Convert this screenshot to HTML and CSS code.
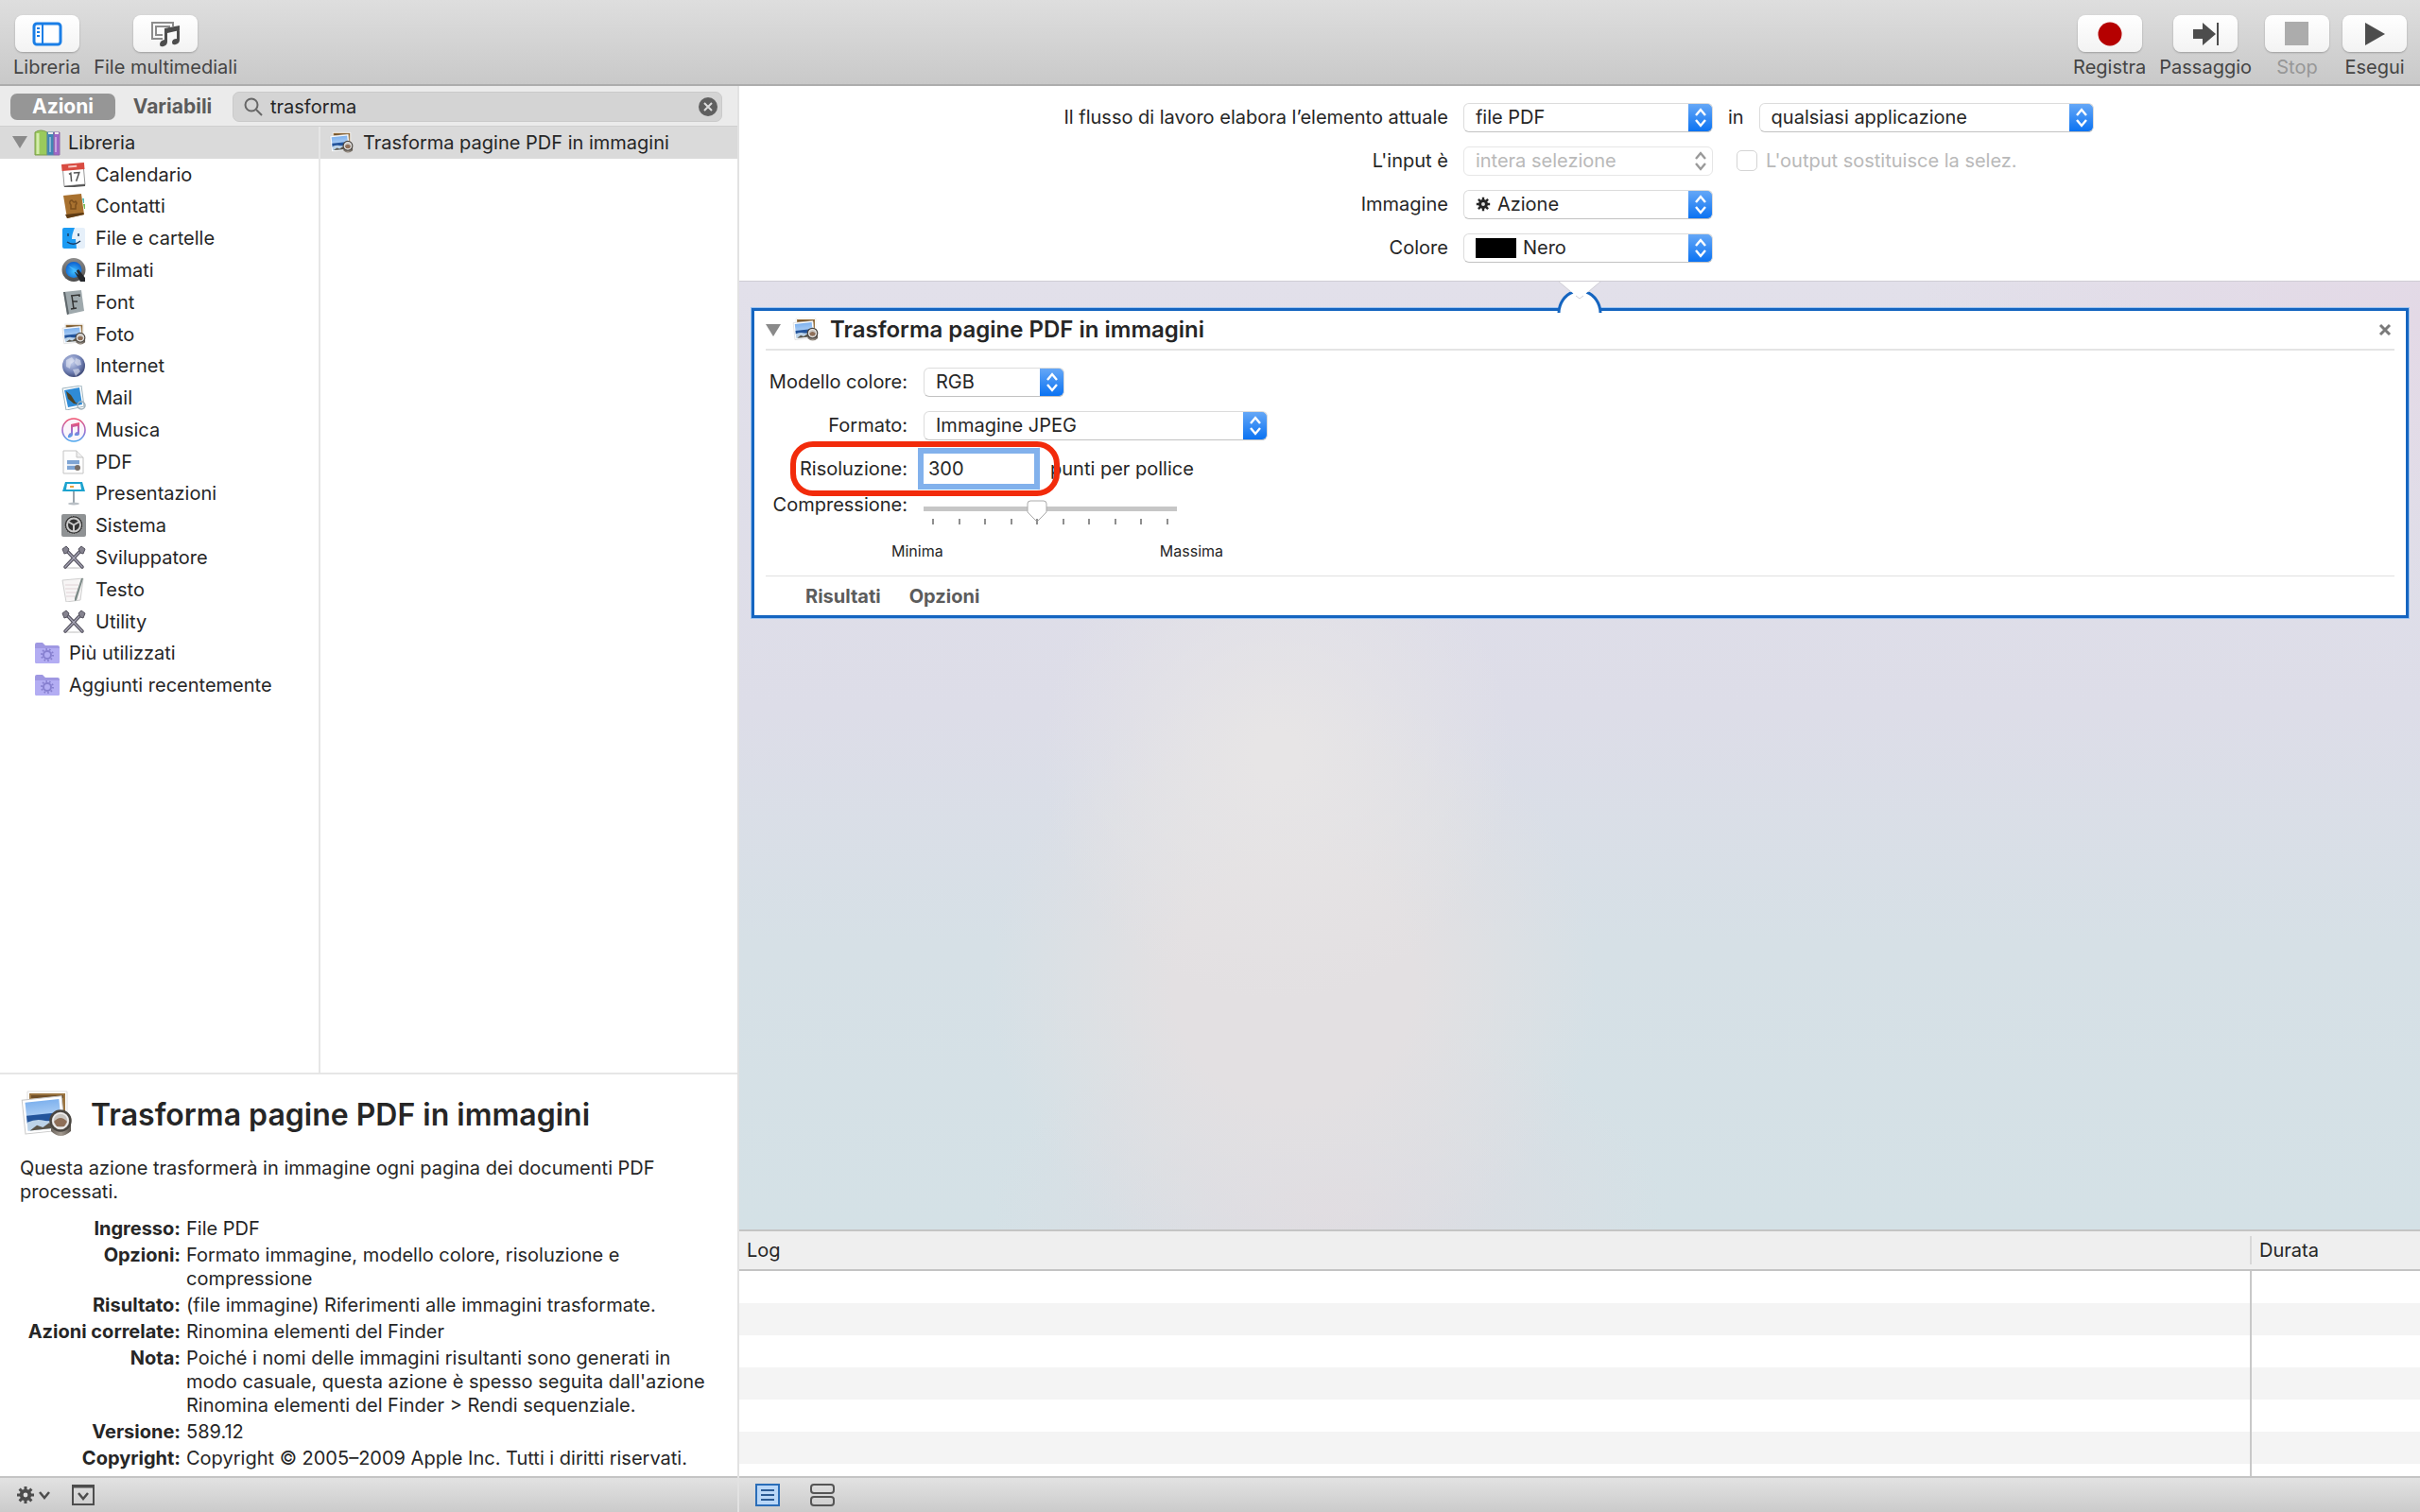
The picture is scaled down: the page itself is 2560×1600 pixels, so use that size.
FILE: index.html
```html
<!DOCTYPE html>
<html lang="it">
<head>
<meta charset="utf-8">
<meta name="viewport" content="width=device-width, initial-scale=1">
<title>Automator</title>
<link rel="stylesheet" href="styles.css">
</head>
<body>
<svg class="sprite" aria-hidden="true">
  <defs>
    <linearGradient id="sky" x1="0" y1="0" x2="0" y2="1"><stop offset="0" stop-color="#7fb2ee"/><stop offset="1" stop-color="#d3e6fa"/></linearGradient>
    <linearGradient id="steel" x1="0" y1="0" x2="0" y2="1"><stop offset="0" stop-color="#8d8d8d"/><stop offset="1" stop-color="#4c4c4c"/></linearGradient>
    <linearGradient id="pinkblue" x1="0" y1="0" x2="0" y2="1"><stop offset="0" stop-color="#f0506e"/><stop offset=".55" stop-color="#a06fd0"/><stop offset="1" stop-color="#4aa8ee"/></linearGradient>
    <radialGradient id="globe" cx=".4" cy=".35" r=".7"><stop offset="0" stop-color="#c9d3ee"/><stop offset=".6" stop-color="#7484b8"/><stop offset="1" stop-color="#3a4470"/></radialGradient>
    <radialGradient id="quick" cx=".5" cy=".6" r=".6"><stop offset="0" stop-color="#3fc0ff"/><stop offset="1" stop-color="#0b5fd0"/></radialGradient>
    <linearGradient id="loupe" x1="0" y1="0" x2="1" y2="0"><stop offset="0" stop-color="#6a635c"/><stop offset=".5" stop-color="#a59c92"/><stop offset="1" stop-color="#5c554e"/></linearGradient>
  </defs>
  <symbol id="preview" viewBox="0 0 56 50">
    <path d="M8 1h42v36H8z" fill="#fff" stroke="#ddd"/><path d="M10 3h38v30H10z" fill="#9a7440"/>
    <path d="M12 5h34v3H12z" fill="#6f4f28"/>
    <g transform="rotate(-6 24 26)"><path d="M4 8h42v36H4z" fill="#fff" stroke="#c9c9c9"/><path d="M7 11h36v30H7z" fill="url(#sky)"/><path d="M7 25h36v8H7z" fill="#23549b"/><path d="M7 32q10-3 18 0t18-1v10H7z" fill="#bcd3e8"/><path d="M9 41l8-5 6 3 7-4 9 6z" fill="#5b5549"/></g>
    <path d="M33 33v10q10 10 21 0V33z" fill="url(#loupe)"/><circle cx="43" cy="32" r="10.500" fill="#c9c5c0" stroke="#4a4641" stroke-width="2.500"/><path d="M36 33q7-8 14 0l-3 5h-8z" fill="#8e6f58"/><circle cx="43" cy="32" r="8" fill="none" stroke="#eee" stroke-width="1.500"/>
  </symbol>
  <symbol id="gear" viewBox="0 0 20 20">
    <g stroke="currentColor" stroke-width="3"><path d="M10 1v18M1 10h18M3.600 3.600l12.800 12.800M16.400 3.600L3.600 16.400"/></g><circle cx="10" cy="10" r="6.200" fill="currentColor"/><circle class="gear-hole" cx="10" cy="10" r="2.400"/>
  </symbol>
  <symbol id="tools" viewBox="0 0 26 26">
    <ellipse cx="13" cy="24" rx="9" ry="1" fill="#ddd"/>
    <g stroke-linecap="round" fill="none"><path d="M5 5L22 23" stroke="#55535f" stroke-width="3.600"/><path d="M21 5L4 23" stroke="#55535f" stroke-width="3.600"/><path d="M5 5L22 23M21 5L4 23" stroke="#a5a3b4" stroke-width="1.300"/></g>
    <path d="M1 4l4-3 3 3-2 4-3 1zM25 4l-4-3-3 3 2 4 3 1z" fill="#85838f" stroke="#55535f"/>
  </symbol>
  <symbol id="folder" viewBox="0 0 28 24">
    <path d="M1 3q0-2 2-2h6l3 3h13q2 0 2 2v15q0 2-2 2H3q-2 0-2-2z" fill="#9f98e2"/><path d="M1 7h26v14q0 2-2 2H3q-2 0-2-2z" fill="#b3adf3"/>
    <circle cx="14" cy="14" r="4" fill="none" stroke="#8780d0" stroke-width="2"/><circle cx="14" cy="14" r="6" fill="none" stroke="#8780d0" stroke-width="2" stroke-dasharray="1.600 2.100"/>
  </symbol>
</svg>

<div class="window">
  <header class="toolbar">
    <div class="tool-group">
      <button class="tool" type="button"><span class="tool-face"><svg width="34" height="26" viewBox="0 0 34 26"><rect x="3" y="2" width="28" height="22" rx="3" fill="#fff" stroke="#1a7ee6" stroke-width="3"/><path d="M12 2v22" stroke="#1a7ee6" stroke-width="2"/><path d="M6 7h3M6 11h3M6 15h3" stroke="#1a7ee6" stroke-width="2"/></svg></span>Libreria</button>
      <button class="tool" type="button"><span class="tool-face"><svg width="34" height="28" viewBox="0 0 34 28"><path d="M14 19H3V2h22v4M14 15H7V6h14v2" fill="none" stroke="#8c8c8c" stroke-width="2"/><path d="M16 8l16-3v5l-13 3v9q0 4-4 5t-4-2q0-4 5-5zM29 8h3v12q0 4-4 5t-4-2q0-4 5-4z" fill="#4d4d4d"/></svg></span>File multimediali</button>
    </div>
    <div class="tool-group">
      <button class="tool" type="button"><span class="tool-face"><svg width="28" height="28" viewBox="0 0 28 28"><circle cx="14" cy="14" r="12.500" fill="#b50000"/></svg></span>Registra</button>
      <button class="tool" type="button"><span class="tool-face"><svg width="28" height="26" viewBox="0 0 28 26"><path d="M1 8h10V1l14 12-14 12v-7H1z" fill="#4d4d4d"/><path d="M27 1v24" stroke="#4d4d4d" stroke-width="2"/></svg></span>Passaggio</button>
      <button class="tool" type="button" disabled><span class="tool-face"><svg width="26" height="26" viewBox="0 0 26 26"><path d="M0 0h25v25H0z" fill="#acacac"/></svg></span>Stop</button>
      <button class="tool" type="button"><span class="tool-face"><svg width="22" height="26" viewBox="0 0 22 26"><path d="M1 1l21 12L1 25z" fill="#4d4d4d"/></svg></span>Esegui</button>
    </div>
  </header>

  <aside class="sidebar">
    <div class="filter">
      <button class="tab tab-on" type="button">Azioni</button>
      <button class="tab" type="button">Variabili</button>
      <div class="search">
        <svg width="20" height="20" viewBox="0 0 20 20"><circle cx="8" cy="8" r="6.500" fill="none" stroke="#666" stroke-width="2"/><path d="M13 13l6 6" stroke="#666" stroke-width="2"/></svg>
        <input type="text" value="trasforma" aria-label="Cerca">
        <button class="plain" type="button" aria-label="Cancella"><svg width="20" height="20" viewBox="0 0 20 20"><circle cx="10" cy="10" r="10" fill="#5f5f5f"/><path d="M6 6l8 8M14 6l-8 8" stroke="#ddd" stroke-width="2"/></svg></button>
      </div>
    </div>

    <div class="browser">
      <ul class="tree">
        <li class="row row-on root"><svg class="arrow" viewBox="0 0 16 13"><path d="M0 0h16L8 13z" fill="#8a8a8a"/></svg><svg class="icon-lg" viewBox="0 0 28 28"><path d="M1 3q6-4 13 0v24H1z" fill="#9aca5c" stroke="#7c9c4c"/><path d="M4 4v22" stroke="#d4ecac" stroke-width="3"/><path d="M14 3h7v24h-7z" fill="#3f86b5" stroke="#5c8aa8"/><path d="M21 3h6v24h-6z" fill="#9e66c9" stroke="#8a68a4"/><path d="M15 4h5M22 4h4" stroke="#eee" stroke-width="2"/><path d="M17 8v16M23 8v16" stroke="#fff" stroke-opacity=".4" stroke-width="2"/></svg>Libreria</li>
        <li class="row leaf"><svg class="icon" viewBox="0 0 26 26"><g transform="rotate(-5 13 13)"><path d="M2 2h22v22H2z" fill="#fff" stroke="#999"/><path d="M1 1h24v7H1z" fill="#d94b41"/><path d="M8 4h9" stroke="#f6c5c0" stroke-width="2"/><path d="M2 25h22" stroke="#555" stroke-width="2"/><path d="M8 12l2-1v9M13 11h6l-4 9" fill="none" stroke="#555" stroke-width="1.500"/></g></svg>Calendario</li>
        <li class="row leaf"><svg class="icon" viewBox="0 0 26 26"><path d="M2 2l19-2 3 22-18 4z" fill="#a8712f"/><path d="M4 22l19-2 1 2-18 4z" fill="#5e3b14"/><path d="M22 5l2 0v5l-1 0z" fill="#5bb"/><path d="M23 11h2v5h-1z" fill="#7b5"/><path d="M9 8q2-2 3 0t3 0q2 2 0 4v4h-5v-4q-2-2-1-4" fill="none" stroke="#7c4f1d" stroke-width="1.500"/></svg>Contatti</li>
        <li class="row leaf"><svg class="icon" viewBox="0 0 26 26"><rect x="1" y="2" width="24" height="22" rx="2" fill="#e6f0fa"/><path d="M3 2h11q-3 7-3 12h4l1 10H3q-2 0-2-2V4q0-2 2-2z" fill="#1c9bf3"/><path d="M7 8v3M18 8v3M6 17q7 5 14-1" stroke="#1b3c63" stroke-width="1.500" fill="none"/></svg>File e cartelle</li>
        <li class="row leaf"><svg class="icon" viewBox="0 0 26 26"><circle cx="13" cy="12.500" r="12.500" fill="url(#steel)"/><circle cx="13" cy="12.500" r="8.500" fill="url(#quick)"/><path d="M14 15l4-3 7 9v4h-5z" fill="#26282c"/><path d="M7 8l8 4 3 6z" fill="#48b8ff"/></svg>Filmati</li>
        <li class="row leaf"><svg class="icon" viewBox="0 0 26 26"><path d="M2 2l19-2 3 22-18 4z" fill="#9fa9ad"/><path d="M2 2l4 24 2-1L4 2z" fill="#5f676b"/><path d="M10 6l9-1v2M11 6l2 14M10 20l6-1M12 12l5 0" stroke="#333" stroke-width="1.500" fill="none"/></svg>Font</li>
        <li class="row leaf"><svg class="icon"><use href="#preview"/></svg>Foto</li>
        <li class="row leaf"><svg class="icon" viewBox="0 0 26 26"><circle cx="13" cy="13" r="12" fill="url(#globe)"/><path d="M5 7l6-3 3 4-4 3-1 5-4-2zM15 5l5 2 1 5-4 1-3-3zM12 17l6-1 2 3-5 5z" fill="#e4e8f4" opacity=".6"/></svg>Internet</li>
        <li class="row leaf"><svg class="icon" viewBox="0 0 26 26"><path d="M1 3l20-3 3 22-19 4z" fill="#fff" stroke="#9db3be"/><path d="M3 5l16-3 3 18-15 3z" fill="#2f8bd6"/><path d="M5 6l5 4 5 8 5 2-7-1-6-5z" fill="#4d4326"/><circle cx="21" cy="21" r="4" fill="none" stroke="#9fb0ba" stroke-width="1.500"/></svg>Mail</li>
        <li class="row leaf"><svg class="icon" viewBox="0 0 26 26"><circle cx="13" cy="13" r="12" fill="#fbf5fb" stroke="url(#pinkblue)" stroke-width="1.600"/><path d="M10 7l9-2v12q0 2-3 2t-2-2 3-2V9l-5 1v8q0 2-3 3t-2-2 3-3z" fill="url(#pinkblue)"/></svg>Musica</li>
        <li class="row leaf"><svg class="icon" viewBox="0 0 26 26"><path d="M2 1h14l7 7v17H2z" fill="#fdfdfd" stroke="#c4c4c4"/><path d="M16 1v7h7" fill="#eee" stroke="#c4c4c4"/><path d="M6 11h13v10H6z" fill="#7fa5d4"/><path d="M6 15h13v2H6z" fill="#dfe9f5"/><circle cx="17" cy="19" r="3" fill="#776e68"/></svg>PDF</li>
        <li class="row leaf"><svg class="icon" viewBox="0 0 26 26"><path d="M4 1h18l3 10H1z" fill="#1ca3cf"/><path d="M6 3h14l1 6H5z" fill="#fff"/><path d="M9 6h4" stroke="#e8a23c" stroke-width="2"/><path d="M13 11v13" stroke="#9aa3ab" stroke-width="2"/><ellipse cx="13" cy="24" rx="6" ry="1.500" fill="#b9bfc5"/></svg>Presentazioni</li>
        <li class="row leaf"><svg class="icon" viewBox="0 0 26 26"><rect x="0" y="1" width="26" height="24" rx="2" fill="#8f9294"/><circle cx="13" cy="12.500" r="9.500" fill="#333"/><circle cx="13" cy="12.500" r="7" fill="none" stroke="#c9c9c9" stroke-width="2"/><path d="M13 12.500V19M13 12.500L7 9M13 12.500L19 9" stroke="#c9c9c9" stroke-width="2"/><circle cx="13" cy="12.500" r="9.500" fill="none" stroke="#aaa" stroke-dasharray="1 1.500"/></svg>Sistema</li>
        <li class="row leaf"><svg class="icon"><use href="#tools"/></svg>Sviluppatore</li>
        <li class="row leaf"><svg class="icon" viewBox="0 0 26 26"><path d="M1 3l22-2-3 23-15 2z" fill="#f7f5f5" stroke="#cfcfcf"/><path d="M4 8h14M4 12h14M5 16h12M5 20h10" stroke="#e0d3d6"/><path d="M23 1l-7 23-2 1 0-3L21 1z" fill="#7d8b88"/></svg>Testo</li>
        <li class="row leaf"><svg class="icon"><use href="#tools"/></svg>Utility</li>
        <li class="row group"><svg class="icon-lg"><use href="#folder"/></svg>Più utilizzati</li>
        <li class="row group"><svg class="icon-lg"><use href="#folder"/></svg>Aggiunti recentemente</li>
      </ul>
      <ul class="results">
        <li class="row row-on"><svg class="icon"><use href="#preview"/></svg>Trasforma pagine PDF in immagini</li>
      </ul>
    </div>

    <section class="details">
      <h1 class="details-title"><svg width="56" height="50"><use href="#preview"/></svg>Trasforma pagine PDF in immagini</h1>
      <p class="summary">Questa azione trasformerà in immagine ogni pagina dei documenti PDF processati.</p>
      <dl class="facts">
        <dt>Ingresso:</dt><dd>File PDF</dd>
        <dt>Opzioni:</dt><dd>Formato immagine, modello colore, risoluzione e compressione</dd>
        <dt>Risultato:</dt><dd>(file immagine) Riferimenti alle immagini trasformate.</dd>
        <dt>Azioni correlate:</dt><dd>Rinomina elementi del Finder</dd>
        <dt>Nota:</dt><dd>Poiché i nomi delle immagini risultanti sono generati in modo casuale, questa azione è spesso seguita dall'azione Rinomina elementi del Finder &gt; Rendi sequenziale.</dd>
        <dt>Versione:</dt><dd>589.12</dd>
        <dt>Copyright:</dt><dd>Copyright © 2005–2009 Apple Inc. Tutti i diritti riservati.</dd>
      </dl>
    </section>
    <footer class="bar bar-left">
      <button class="plain" type="button" aria-label="Azioni"><svg width="36" height="20" viewBox="0 0 36 20"><use class="on-bar" href="#gear" width="20" height="20"/><path d="M25 7l5 6 5-6" fill="none" stroke="#4d4d4d" stroke-width="2.500"/></svg></button>
      <button class="plain" type="button" aria-label="Mostra descrizione"><svg width="24" height="22" viewBox="0 0 24 22"><path d="M1 1h22v20H1z" fill="none" stroke="#4d4d4d" stroke-width="2"/><path d="M1 2h22" stroke="#4d4d4d" stroke-width="3"/><path d="M7 9l5 6 5-6" fill="none" stroke="#4d4d4d" stroke-width="2.500"/></svg></button>
    </footer>
  </aside>

  <main class="main">
    <form class="setup">
      <label for="item">Il flusso di lavoro elabora l’elemento attuale</label>
      <div class="controls"><select class="popup w-mid" id="item"><option>file PDF</option></select><label for="app">in</label><select class="popup w-app" id="app"><option>qualsiasi applicazione</option></select></div>
      <label for="input">L'input è</label>
      <div class="controls"><select class="popup w-mid" id="input" disabled><option>intera selezione</option></select><span class="check"><input type="checkbox" id="replace" disabled><label for="replace">L'output sostituisce la selez.</label></span></div>
      <label for="image">Immagine</label>
      <div class="controls"><select class="popup w-mid with-gear" id="image"><option>Azione</option></select><svg class="popup-gear" viewBox="0 0 20 20"><use href="#gear"/></svg></div>
      <label for="color">Colore</label>
      <div class="controls"><select class="popup w-mid with-swatch" id="color"><option>Nero</option></select><span class="popup-swatch"></span></div>
    </form>

    <section class="canvas">
      <article class="action">
        <header class="action-head">
          <button class="plain" type="button" aria-label="Comprimi"><svg class="arrow" viewBox="0 0 16 13"><path d="M0 0h16L8 13z" fill="#8a8a8a"/></svg></button>
          <svg class="icon-lg"><use href="#preview"/></svg>
          <h2>Trasforma pagine PDF in immagini</h2>
          <button class="plain" type="button" aria-label="Rimuovi"><svg width="14" height="14" viewBox="0 0 14 14"><path d="M2 2l10 10M12 2L2 12" stroke="#7a7a7a" stroke-width="3"/></svg></button>
        </header>
        <div class="action-body">
          <div class="field"><label for="model">Modello colore:</label><select class="popup w-rgb" id="model"><option>RGB</option></select></div>
          <div class="field"><label for="format">Formato:</label><select class="popup w-format" id="format"><option>Immagine JPEG</option></select></div>
          <div class="field marked"><label for="dpi">Risoluzione:</label><input class="dpi" type="text" id="dpi" value="300"><span>punti per pollice</span></div>
          <div class="field field-slider">
            <label for="quality">Compressione:</label>
            <div class="slider">
              <input type="range" id="quality" min="0" max="9" value="4">
              <div class="ticks"><i></i><i></i><i></i><i></i><i></i><i></i><i></i><i></i><i></i><i></i></div>
              <div class="ends"><span>Minima</span><span>Massima</span></div>
            </div>
          </div>
        </div>
        <footer class="action-foot"><button class="plain" type="button">Risultati</button><button class="plain" type="button">Opzioni</button></footer>
      </article>
      <svg class="connector" width="52" height="34" viewBox="0 0 52 34"><path d="M4 34V32A22 23 0 0 1 48 32V34z" fill="#fff"/><path d="M4 33A22 24 0 0 1 19 11M48 33A22 24 0 0 0 33 11" fill="none" stroke="#1565c0" stroke-width="3"/><path d="M4 0L26 18 48 0z" fill="#fff"/><path d="M4 0L17 11M48 0L35 11M22 15l4 3 4-3" fill="none" stroke="#d0ced6"/></svg>
    </section>

    <section class="log">
      <table>
        <thead><tr><th>Log</th><th class="time"><span>Durata</span></th></tr></thead>
        <tbody><tr><td></td><td></td></tr><tr><td></td><td></td></tr><tr><td></td><td></td></tr><tr><td></td><td></td></tr><tr><td></td><td></td></tr><tr><td></td><td></td></tr><tr><td></td><td></td></tr></tbody>
      </table>
    </section>
    <footer class="bar bar-right">
      <button class="plain" type="button" aria-label="Log"><svg width="26" height="24" viewBox="0 0 26 24"><path d="M1 1h24v22H1z" fill="#b9d7f8" stroke="#2a6db8" stroke-width="2"/><path d="M6 7h14M6 12h14M6 17h14" stroke="#2a5a94" stroke-width="2"/></svg></button>
      <button class="plain" type="button" aria-label="Variabili"><svg width="26" height="24" viewBox="0 0 26 24"><rect x="1" y="1" width="24" height="9" rx="3" fill="none" stroke="#555" stroke-width="2"/><rect x="1" y="14" width="24" height="9" rx="3" fill="none" stroke="#555" stroke-width="2"/></svg></button>
    </footer>
  </main>
</div>
</body>
</html>
```
FILE: styles.css
```css
*, ::before, ::after { box-sizing: border-box; }
body, h1, h2, p, ul, dl, dd { margin: 0; padding: 0; }
body { font: 20px/24px Inter, "Liberation Sans", sans-serif; color: #262626; }
button, input, select { font: inherit; color: inherit; margin: 0; }
svg { display: block; flex: none; }
ul { list-style: none; }
.sprite { position: absolute; width: 0; height: 0; }
.plain { border: 0; padding: 0; background: none; }

.window {
  display: grid;
  grid-template: auto 1fr / 782px 1fr;
  min-height: 100vh;
  background: #fff;
}

/* Toolbar */
.toolbar {
  grid-column: 1 / -1;
  display: flex;
  justify-content: space-between;
  padding: 16px 14px 6px;
  border-bottom: 2px solid #adadad;
  background: linear-gradient(#dedede, #c9c9c9);
}
.tool-group { display: flex; gap: 14px; }
.tool {
  display: flex;
  flex-direction: column;
  align-items: center;
  gap: 4px;
  min-width: 68px;
  padding: 0;
  border: 0;
  background: none;
  color: #444;
  white-space: nowrap;
}
.tool:disabled { color: #979797; }
.tool-face {
  display: flex;
  align-items: center;
  justify-content: center;
  width: 68px;
  height: 39px;
  border-radius: 8px;
  background: linear-gradient(#fff, #f3f3f3);
  box-shadow: 0 1px 2px #00000040;
}

/* Sidebar */
.sidebar { display: flex; flex-direction: column; border-right: 2px solid #e2e2e2; }
.filter {
  display: flex;
  align-items: center;
  height: 43px;
  padding: 2px 16px 0 11px;
  border-bottom: 1px solid #d0d0d0;
  background: #ebebeb;
}
.tab {
  width: 111px;
  height: 28px;
  padding: 0;
  border: 0;
  border-radius: 7px;
  background: none;
  font-size: 21px;
  font-weight: 700;
  color: #5c5c5c;
}
.tab + .tab { width: 121px; }
.tab-on { background: #969696; color: #fff; }
.search {
  flex: 1;
  display: flex;
  align-items: center;
  gap: 8px;
  height: 32px;
  margin-left: 3px;
  padding: 0 4px 0 11px;
  border: 1px solid #cacaca;
  border-radius: 7px;
  background: #d4d4d4;
}
.search input { flex: 1; min-width: 0; padding: 0; border: 0; background: none; outline: 0; }

.browser { flex: 1; display: grid; grid-template-columns: 337px 1fr; }
.tree { display: grid; grid-auto-rows: 1fr; align-self: start; height: 608px; }
.results { border-left: 2px solid #e6e6e6; }
.results .row { height: 34px; padding-left: 9px; }
.row { display: flex; align-items: center; gap: 10px; white-space: nowrap; }
.row-on { background: #dadada; }
.root { gap: 8px; padding-left: 13px; }
.root .arrow { margin-right: -1px; }
.leaf { padding-left: 65px; }
.group { gap: 9px; padding-left: 36px; }
.icon { width: 26px; height: 26px; }
.icon-lg { width: 28px; height: 28px; }
.arrow { width: 16px; height: 13px; }

.details { padding: 17px 19px 6px 21px; border-top: 2px solid #e6e6e6; line-height: 25px; }
.details-title { display: flex; align-items: center; gap: 19px; height: 50px; font-size: 32px; font-weight: 600; white-space: nowrap; }
.summary { margin: 20px 30px 14px 0; }
.facts { display: grid; grid-template-columns: 170px 1fr; gap: 3px 6px; }
.facts dt { font-weight: 700; text-align: right; white-space: nowrap; justify-self: end; }

.bar {
  display: flex;
  align-items: center;
  height: 38px;
  border-top: 2px solid #c4c4c4;
  background: linear-gradient(#e2e2e2, #cbcbcb);
}
.bar-left { gap: 23px; padding-left: 17px; }
.bar-right { gap: 32px; padding-left: 17px; }
.on-bar { color: #4d4d4d; }
.gear-hole { fill: #e2e2e2; }

/* Workflow settings */
.main { display: flex; flex-direction: column; min-width: 0; }
.setup {
  display: grid;
  grid-template-columns: auto auto;
  justify-content: center;
  align-items: center;
  gap: 16px;
  padding: 18px 2px 20px 0;
  background: #fff;
}
.setup > label { text-align: right; }
.controls { position: relative; display: flex; align-items: center; gap: 16px; height: 30px; }

.popup {
  appearance: none;
  height: 31px;
  padding: 0 30px 0 12px;
  border: 1px solid #dcdcdc;
  border-bottom-color: #c2c2c2;
  border-radius: 6px;
  background: #fff url("data:image/svg+xml,%3Csvg xmlns='http://www.w3.org/2000/svg' width='26' height='31'%3E%3Cdefs%3E%3ClinearGradient id='g' x2='0' y2='1'%3E%3Cstop stop-color='%2368a9f7'/%3E%3Cstop offset='1' stop-color='%230871f2'/%3E%3C/linearGradient%3E%3C/defs%3E%3Cpath d='M0 0h26v31H0z' fill='url(%23g)'/%3E%3Cpath d='M8 13l5-6 5 6M8 18l5 6 5-6' fill='none' stroke='%23fff' stroke-width='2.400'/%3E%3C/svg%3E") right / 26px 31px no-repeat border-box;
}
.popup:disabled {
  opacity: 1;
  color: #b9b9b9;
  border-color: #e6e6e6;
  background-image: url("data:image/svg+xml,%3Csvg xmlns='http://www.w3.org/2000/svg' width='26' height='31'%3E%3Cpath d='M8 13l5-6 5 6M8 18l5 6 5-6' fill='none' stroke='%23999' stroke-width='2.400'/%3E%3C/svg%3E");
}
.w-mid { width: 264px; }
.w-app { width: 354px; }
.w-rgb { width: 149px; }
.w-format { width: 364px; }
.with-gear { padding-left: 35px; }
.with-swatch { padding-left: 62px; }
.popup-gear { position: absolute; left: 13px; width: 16px; height: 16px; pointer-events: none; }
.popup-gear .gear-hole { fill: #fff; }
.popup-swatch { position: absolute; left: 13px; width: 43px; height: 21px; background: #000; pointer-events: none; }
.check { display: flex; align-items: center; gap: 9px; margin-left: 9px; color: #b9b9b9; }
.check input { appearance: none; width: 22px; height: 22px; border: 1px solid #d4d4d4; border-radius: 5px; background: #fff; }

/* Workflow canvas */
.canvas {
  position: relative;
  flex: 1;
  padding: 28px 12px 28px 13px;
  border-top: 1px solid #cfcdd4;
  background:
    radial-gradient(ellipse 14% 26% at 32% 50%, #e7e5e6 10%, #e7e5e600),
    radial-gradient(ellipse 18% 32% at 33% 74%, #e3e0e2 40%, #e3e0e200),
    radial-gradient(ellipse 20% 20% at 35% 98%, #dfdbe1 0, #dfdbe100),
    radial-gradient(ellipse 30% 30% at 100% 4%, #e3d9e6 0, #e3d9e600),
    linear-gradient(#e2e0ea, #dddde8 45%, #d6e0e6 70%, #d4e1e6);
}
.action { border: 3px solid #1565c0; outline: 1px solid #9cc4f2; background: #fff; }
.action-head {
  display: flex;
  align-items: center;
  height: 42px;
  margin: 0 12px;
  border-bottom: 2px solid #e4e4e4;
}
.action-head .icon-lg { margin: 0 12px; }
.action-head h2 { flex: 1; font-size: 24px; font-weight: 600; }
.action-head .plain:last-child { margin-right: 3px; }
.action-body { display: grid; gap: 14px; padding: 17px 0 16px; }
.field { display: flex; align-items: center; gap: 17px; height: 32px; }
.field > label { width: 162px; text-align: right; white-space: nowrap; }
.marked { position: relative; }
.marked::after {
  content: "";
  position: absolute;
  top: -13px;
  left: 38px;
  width: 285px;
  height: 58px;
  border: 6px solid #f22b0b;
  border-radius: 24px;
  pointer-events: none;
}
.dpi { width: 117px; height: 32px; padding: 0 5px; border: 0; outline: 6px solid #82b1ec; background: #fff; }
.field-slider { align-items: flex-start; height: auto; margin-top: -8px; line-height: 32px; }
.slider { padding-top: 11px; }
.slider input {
  appearance: none;
  display: block;
  width: 268px;
  height: 24px;
  background: linear-gradient(#c6c6c6, #c6c6c6) 0 7px / 100% 5px no-repeat;
  outline: 0;
}
.slider input::-webkit-slider-thumb {
  appearance: none;
  width: 22px;
  height: 24px;
  background: url("data:image/svg+xml,%3Csvg xmlns='http://www.w3.org/2000/svg' width='22' height='24'%3E%3Cpath d='M1 4q0-3 3-3h14q3 0 3 3v9L11 23 1 13z' fill='%23fff' stroke='%23aaa'/%3E%3C/svg%3E");
}
.ticks { display: flex; justify-content: space-between; width: 250px; margin: -4px 0 0 9px; }
.ticks i { width: 2px; height: 6px; background: #8f8f8f; }
.ends { display: flex; justify-content: space-between; width: 351px; margin: 18px 0 0 -34px; font-size: 16px; line-height: 20px; }
.action-foot { display: flex; align-items: center; gap: 30px; height: 42px; margin: 0 12px; padding-left: 42px; border-top: 1px solid #e0e0e0; }
.action-foot .plain { font-weight: 700; color: #5c5c5c; }
.connector { position: absolute; top: 0; left: 50%; margin-left: -26px; }

/* Log */
.log { height: 261px; overflow: hidden; border-top: 2px solid #c4c4c4; }
.log table { width: 100%; border-collapse: separate; border-spacing: 0; }
.log th { height: 42px; padding: 0 8px; border-bottom: 2px solid #c4c4c4; background: #efefef; font-weight: 400; text-align: left; }
.log .time { width: 180px; padding: 0; }
.time span { display: block; padding: 3px 8px; border-left: 2px solid #d8d8d8; }
.log td { height: 34px; padding: 0; }
.log td + td { border-left: 2px solid #c8c8c8; }
.log tbody tr:nth-child(even) { background: #f4f4f4; }
```
